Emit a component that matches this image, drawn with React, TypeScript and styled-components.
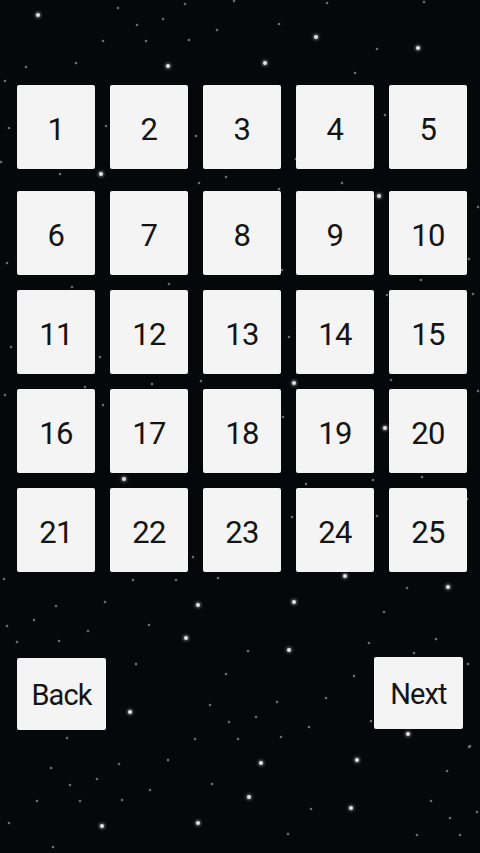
import React from 'react';
import styled, { createGlobalStyle } from 'styled-components';

// star field, picked off the reference: [x, y, bright]
const STARS: [number, number, number?][] = [
  [38, 15, 1], [118, 8], [185, 4], [234, 1], [327, 3], [424, 2], [137, 25], [163, 19],
  [217, 30], [279, 24], [316, 37, 1], [418, 48, 1], [377, 49], [103, 41], [146, 41],
  [189, 40], [26, 67], [76, 63], [168, 66, 1], [265, 63, 1], [355, 73], [5, 81],
  [9, 128], [106, 126], [196, 136], [1, 162], [60, 174], [101, 174, 1], [199, 183],
  [7, 263], [72, 287], [169, 284], [226, 177], [279, 189], [282, 270], [289, 337],
  [201, 381], [294, 383, 1], [385, 115], [296, 159], [342, 183], [379, 196, 1],
  [478, 207], [469, 259], [421, 280], [473, 294], [387, 295], [391, 380], [11, 347],
  [100, 357], [5, 395], [85, 387], [152, 384], [103, 405], [124, 479, 1], [193, 557],
  [283, 417], [385, 428, 1], [478, 391], [306, 484], [373, 480], [422, 477], [467, 499],
  [292, 517], [377, 516], [345, 576, 1],
  [4, 579], [133, 580], [176, 580], [218, 578], [407, 588], [448, 587, 1], [56, 606],
  [105, 602], [198, 605, 1], [294, 602, 1], [384, 612], [34, 620], [7, 626], [149, 625],
  [88, 631], [186, 638, 1], [17, 642], [59, 641], [369, 643], [436, 639], [248, 651],
  [289, 650, 1], [414, 653], [468, 664], [136, 664], [226, 674], [354, 676], [130, 712, 1],
  [210, 705], [277, 702], [326, 698], [229, 722], [256, 717], [309, 727], [371, 721],
  [67, 738], [195, 739], [238, 739], [281, 737], [408, 734, 1], [469, 747],
  [51, 768], [119, 764], [168, 760], [261, 763, 1], [357, 760, 1], [470, 746], [447, 771],
  [70, 785], [97, 779], [212, 784], [150, 790], [37, 801], [80, 801], [122, 800],
  [249, 797, 1], [351, 808, 1], [311, 809], [431, 801], [477, 812], [450, 818], [9, 823],
  [102, 826, 1], [198, 823, 1], [288, 834], [417, 835], [460, 835], [53, 847],
];

const LEVELS = Array.from({ length: 25 }, (_, i) => i + 1);

const GlobalStyle = createGlobalStyle`
  html, body {
    margin: 0;
    padding: 0;
    background: #05070a;
  }
`;

const Screen = styled.div`
  position: relative;
  width: 480px;
  height: 853px;
  overflow: hidden;
  background: #05070a;
  font-family: Roboto, 'Liberation Sans', sans-serif;
`;

const Sky = styled.div`
  position: absolute;
  inset: 0;
  pointer-events: none;
`;

const Star = styled.span<{ $bright?: boolean }>`
  position: absolute;
  width: ${({ $bright }) => ($bright ? '4px' : '2px')};
  height: ${({ $bright }) => ($bright ? '4px' : '2px')};
  border-radius: 50%;
  transform: translate(-50%, -50%);
  background: ${({ $bright }) => ($bright ? '#e0e0e0' : '#7f8287')};
  box-shadow: ${({ $bright }) =>
    $bright ? '0 0 3px 1px rgba(210,210,210,0.5)' : '0 0 1px 0.5px rgba(140,140,140,0.35)'};
`;

const Content = styled.main`
  position: relative;
  z-index: 1;
  padding-top: 85px;
`;

const LevelGrid = styled.div`
  display: grid;
  grid-template-columns: repeat(5, 78px);
  grid-template-rows: 91px repeat(4, 84px);
  column-gap: 15px;
  row-gap: 15px;
  align-items: start;
  padding: 0 17px;
`;

const Tile = styled.button`
  height: 84px;
  width: 78px;
  display: flex;
  align-items: center;
  justify-content: center;
  padding: 4px 0 0;
  border: none;
  border-radius: 2px;
  background: #f4f4f4;
  color: #141414;
  font-family: Roboto, 'Liberation Sans', sans-serif;
  font-size: 31px;
  font-weight: 400;
  letter-spacing: -0.6px;
  cursor: pointer;
`;

const NavRow = styled.div`
  display: flex;
  justify-content: space-between;
  align-items: flex-start;
  padding: 0 17px;
  margin-top: 85px;
`;

const NavButton = styled.button<{ $drop?: number }>`
  width: 89px;
  height: 72px;
  margin-top: ${({ $drop }) => $drop ?? 0}px;
  display: flex;
  align-items: center;
  justify-content: center;
  border: none;
  border-radius: 2px;
  background: #f4f4f4;
  color: #141414;
  font-family: Roboto, 'Liberation Sans', sans-serif;
  font-size: 29px;
  font-weight: 400;
  letter-spacing: -0.9px;
  padding: 2px 0 0;
  cursor: pointer;
`;

const App = () => {
  return (
    <Screen>
      <GlobalStyle />
      <Sky>
        {STARS.map(([x, y, b], i) => (
          <Star key={i} $bright={!!b} style={{ left: x, top: y }} />
        ))}
      </Sky>
      <Content>
        <LevelGrid>
          {LEVELS.map(n => (
            <Tile key={n}>{n}</Tile>
          ))}
        </LevelGrid>
        <NavRow>
          <NavButton $drop={1}>Back</NavButton>
          <NavButton>Next</NavButton>
        </NavRow>
      </Content>
    </Screen>
  );
};

export default App;
